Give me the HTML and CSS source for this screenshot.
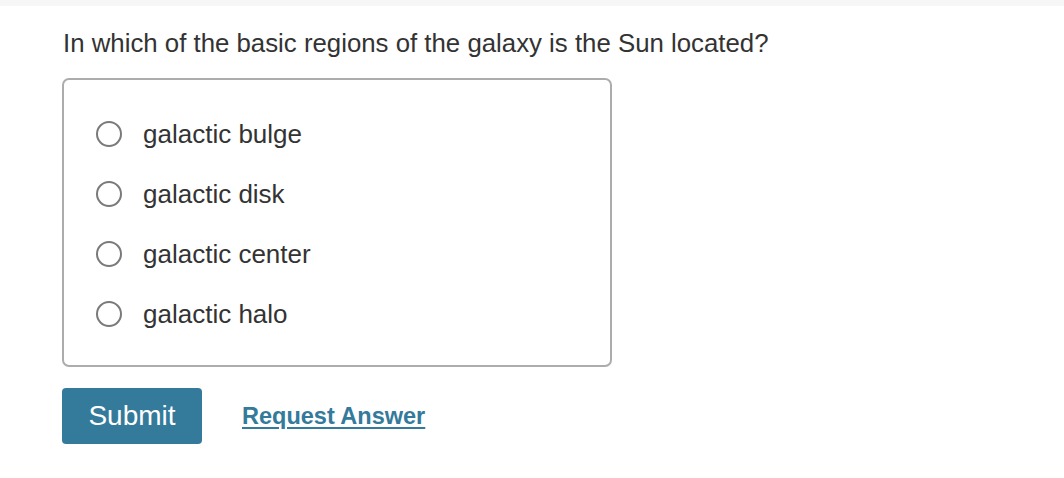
FILE: index.html
```html
<!DOCTYPE html>
<html>
<head>
<meta charset="utf-8">
<link rel="stylesheet" href="styles.css">
</head>
<body>
<div class="topbar"></div>
<main class="content">
  <p class="question">In which of the basic regions of the galaxy is the Sun located?</p>
  <div class="choices">
    <label class="choice"><span class="radio"></span><span class="label">galactic bulge</span></label>
    <label class="choice"><span class="radio"></span><span class="label">galactic disk</span></label>
    <label class="choice"><span class="radio"></span><span class="label">galactic center</span></label>
    <label class="choice"><span class="radio"></span><span class="label">galactic halo</span></label>
  </div>
  <div class="actions">
    <button class="submit">Submit</button>
    <a class="request" href="#">Request Answer</a>
  </div>
</main>
</body>
</html>
```
FILE: styles.css
```css
* { box-sizing: border-box; }
html, body { margin: 0; padding: 0; background: #fff; }
body {
  font-family: "Liberation Sans", Arial, Helvetica, sans-serif;
  color: #333;
  width: 1064px;
  height: 478px;
  overflow: hidden;
}
.topbar {
  height: 6px;
  background: #f6f6f6;
}
.content {
  padding: 0 0 0 62px;
}
.question {
  margin: 0;
  padding-top: 20px;
  font-size: 25.8px;
  line-height: 34px;
  padding-left: 1px;
  color: #333;
}
.choices {
  margin-top: 18px;
  width: 550px;
  height: 289px;
  border: 2px solid #acacac;
  border-radius: 7px;
  padding: 24px 0 0 32px;
  display: flex;
  flex-direction: column;
}
.choice {
  display: flex;
  align-items: center;
  height: 60px;
}
.radio {
  width: 26px;
  height: 26px;
  border: 2px solid #7a7a7a;
  border-radius: 50%;
  flex: none;
}
.label {
  margin-left: 21px;
  font-size: 26px;
  color: #333;
}
.actions {
  margin-top: 21px;
  display: flex;
  align-items: center;
}
.submit {
  width: 140px;
  height: 56px;
  background: #337a9b;
  border: none;
  border-radius: 4px;
  color: #fff;
  font-family: "Liberation Sans", Arial, sans-serif;
  font-size: 28px;
  padding: 0;
}
.request {
  margin-left: 40px;
  font-size: 23.5px;
  font-weight: bold;
  color: #337a9b;
  text-decoration: underline;
  text-underline-offset: 3px;
}
```
